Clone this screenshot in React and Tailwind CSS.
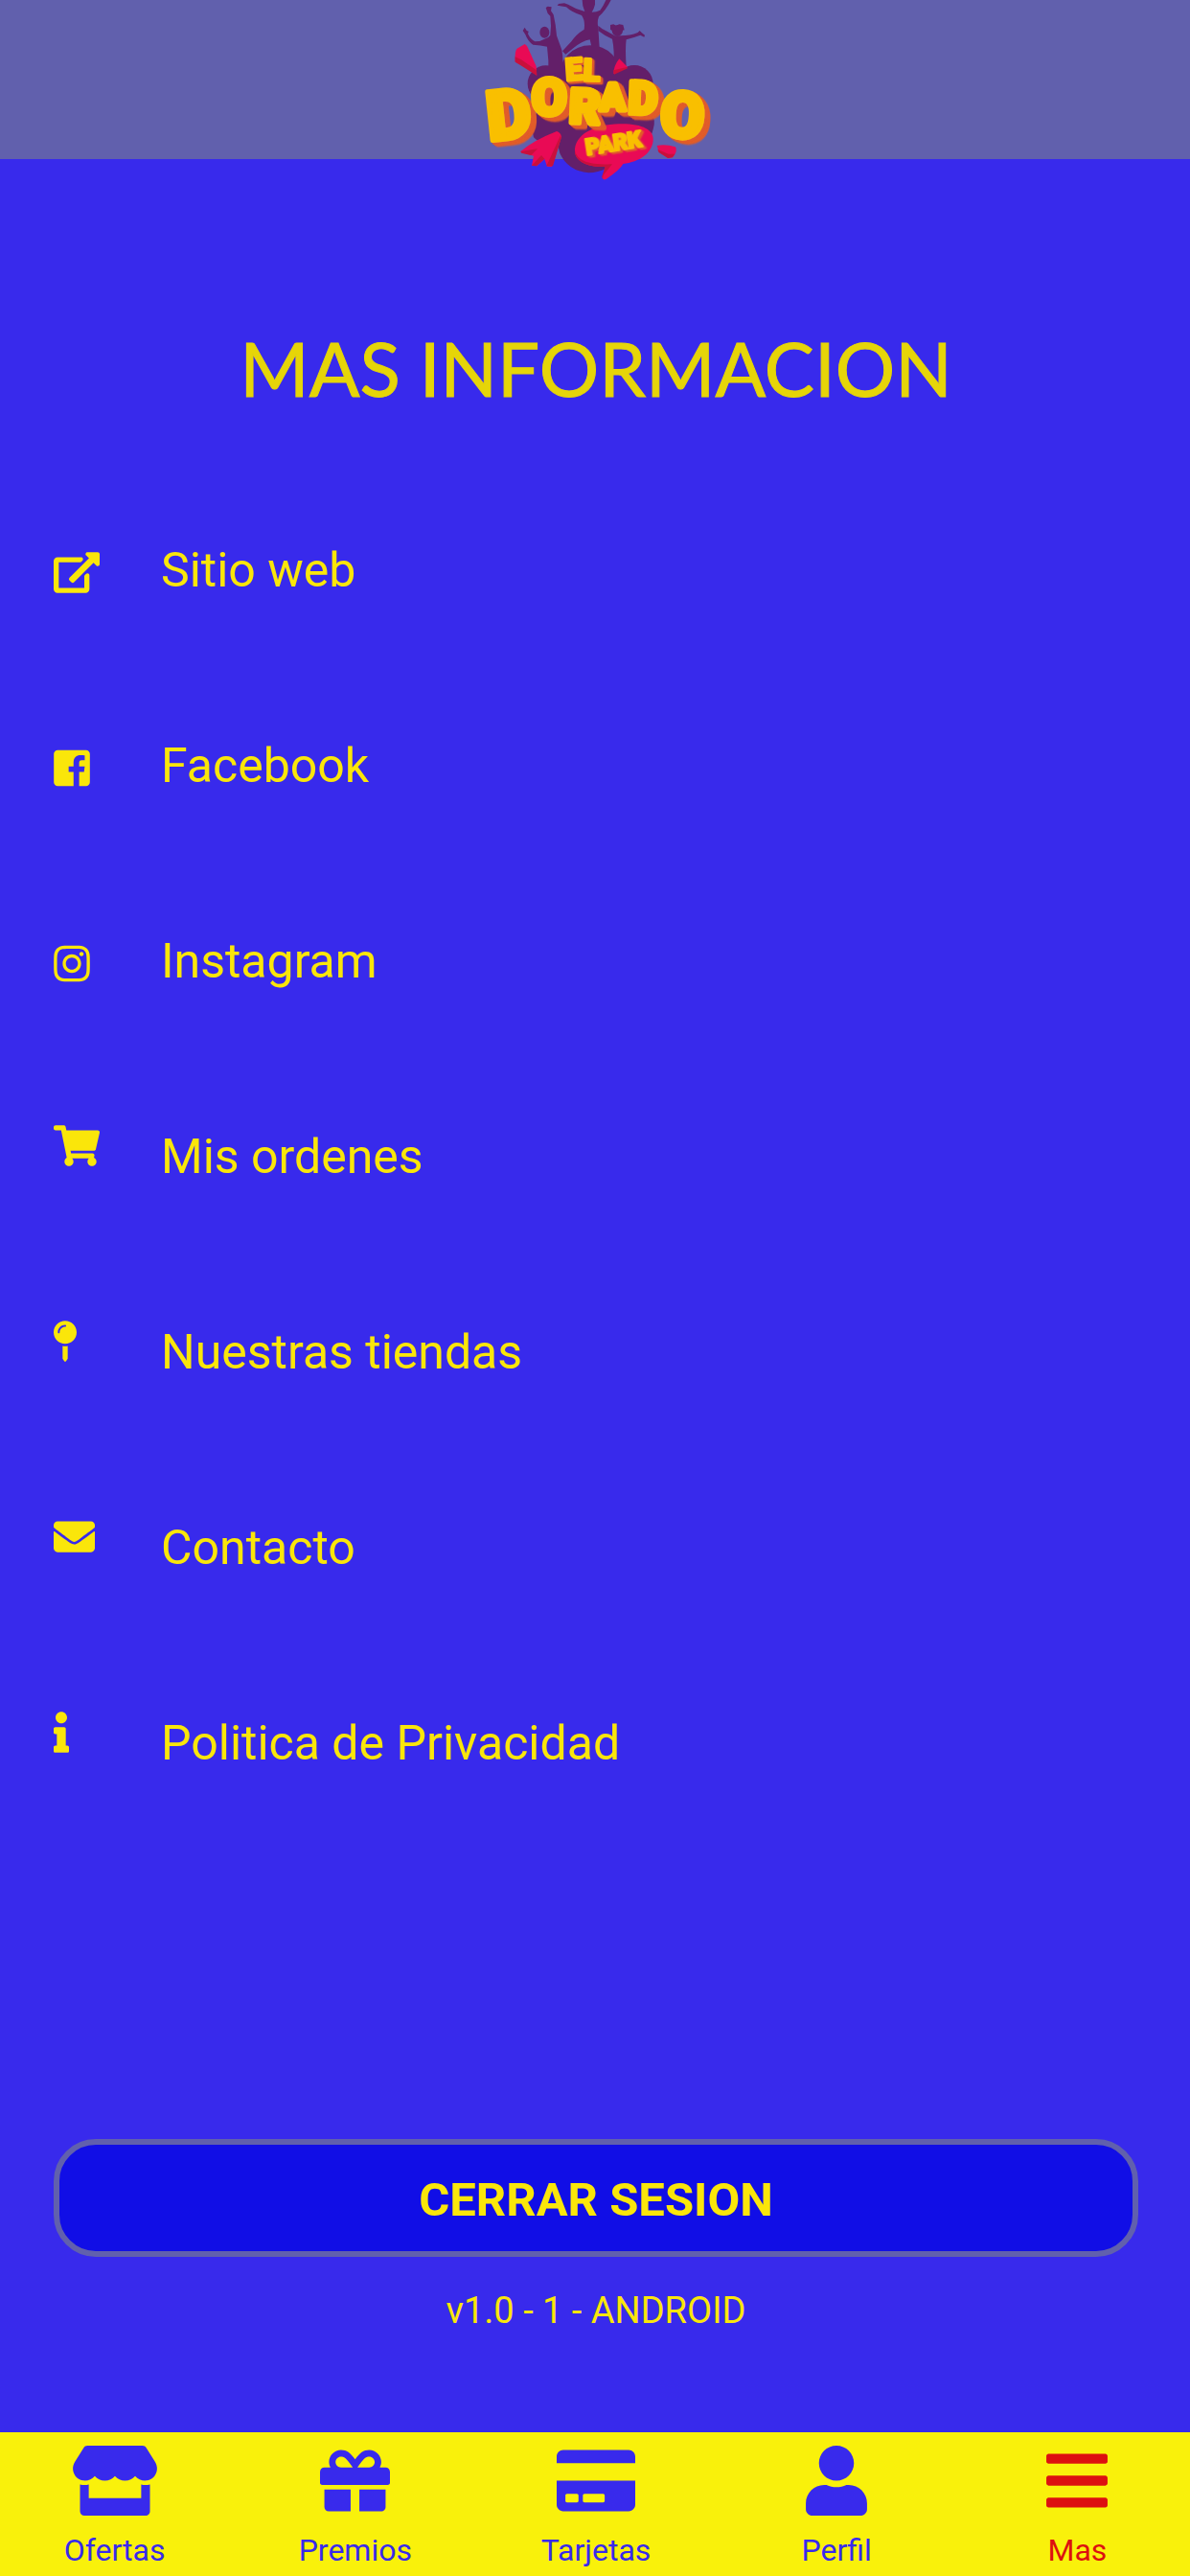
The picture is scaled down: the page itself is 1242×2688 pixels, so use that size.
import React from 'react';
import {
  FaInstagram,
  FaShoppingCart,
  FaMapPin,
  FaEnvelope,
  FaInfo,
  FaStore,
  FaGift,
  FaCreditCard,
  FaUser,
  FaBars,
} from 'react-icons/fa';

function ExternalLinkIcon({ className }) {
  return (
    <svg className={className} viewBox="0 0 576 512" fill="currentColor">
      <path d="M576 24v127.984c0 21.461-25.96 31.98-40.971 16.971l-35.707-35.709-243.523 243.523c-9.373 9.373-24.568 9.373-33.941 0l-22.627-22.627c-9.373-9.373-9.373-24.569 0-33.941L442.756 76.676l-35.703-35.705C391.982 25.9 402.656 0 424.024 0H552c13.255 0 24 10.745 24 24zM407.029 270.794l-16 16A23.999 23.999 0 0 0 384 303.765V448H64V128h264a24.003 24.003 0 0 0 16.97-7.029l16-16C376.089 89.851 365.381 64 344 64H48C21.49 64 0 85.49 0 112v352c0 26.51 21.49 48 48 48h352c26.51 0 48-21.49 48-48V287.764c0-21.382-25.852-32.09-40.971-16.97z" />
    </svg>
  );
}

function FacebookIcon({ className }) {
  return (
    <svg className={className} viewBox="0 0 448 512" fill="currentColor">
      <path d="M448 80v352c0 26.5-21.5 48-48 48h-85.3V302.8h60.6l8.7-67.6h-69.3V192c0-19.6 5.4-32.9 33.5-32.9H384V98.7c-6.2-.8-27.4-2.7-52.2-2.7-51.6 0-87 31.5-87 89.4v49.9H184v67.6h60.9V480H48c-26.5 0-48-21.5-48-48V80c0-26.5 21.5-48 48-48h352c26.5 0 48 21.5 48 48z" />
    </svg>
  );
}

// Letras del logo: cada una con su tamaño y giro
const dorado = [
  { c: 'D', x: 88, y: 441, size: 216, rotate: -6 },
  { c: 'O', x: 221, y: 360, size: 160, rotate: 0 },
  { c: 'R', x: 337, y: 383, size: 150, rotate: 3 },
  { c: 'A', x: 436, y: 345, size: 116, rotate: 0 },
  { c: 'D', x: 523, y: 355, size: 142, rotate: 2 },
  { c: 'O', x: 621, y: 427, size: 200, rotate: 3 },
];

function Logo() {
  return (
    <svg className="h-[200px] w-[280px] shrink-0" viewBox="0 0 840 600" role="img" aria-label="El Dorado Park">
      <defs>
        <filter id="extrude" x="-10%" y="-10%" width="125%" height="130%">
          <feDropShadow dx="6" dy="4" stdDeviation="0" floodColor="#e15c2b" />
          <feDropShadow dx="6" dy="4" stdDeviation="0" floodColor="#e15c2b" />
          <feDropShadow dx="6" dy="5" stdDeviation="0" floodColor="#e15c2b" />
        </filter>
        <filter id="extrudeSmall" x="-10%" y="-10%" width="125%" height="130%">
          <feDropShadow dx="4" dy="3" stdDeviation="0" floodColor="#e15c2b" />
          <feDropShadow dx="4" dy="4" stdDeviation="0" floodColor="#e15c2b" />
        </filter>
      </defs>

      {/* fondo */}
      <g fill="#631f69">
        <circle cx="266" cy="262" r="57" />
        <circle cx="405" cy="240" r="98" />
        <circle cx="543" cy="263" r="59" />
        <path d="M210 270H603L594 350Q612 375 602 405Q590 460 520 470L495 490Q460 540 400 541Q335 535 310 480L300 440Q250 455 228 430Q215 380 240 350Z" />
        {/* siluetas */}
        <path d="M380 0H420V14Q416 30 410 38Q425 38 436 32Q448 16 456 -4L472 -4Q456 30 432 52Q426 68 430 86L434 150H410L404 124Q380 128 350 152L328 170L318 160L346 130Q360 108 386 92Q390 64 378 48Q346 38 330 22L302 17L306 12L324 10L336 14Q362 30 388 36Q380 20 380 0Z" />
        <ellipse cx="262" cy="101" rx="15" ry="18" />
        <path d="M200 86L206 96L212 98L210 106Q218 124 232 130Q250 130 262 122Q274 120 280 110Q284 80 280 50L272 42L266 24L272 20L284 22L282 34L290 46Q298 80 300 112L316 156Q322 190 318 230H274Q276 190 270 146Q250 142 226 140Q210 130 202 108L194 96Z" />
        <circle cx="490" cy="96" r="17" />
        <path d="M468 78L478 76L486 80L496 76L508 78L512 94L504 96L474 96L468 92Z" />
        <path d="M430 80L442 90Q462 100 482 112H500Q530 112 554 102L560 96L566 102L576 110L574 116L562 110Q540 118 518 124Q514 150 518 210H478Q482 160 474 122Q450 112 430 96Z" />
      </g>

      {/* confeti */}
      <g fill="#e90a55">
        <path d="M200 138Q208 142 210 150L236 208L238 236L190 204L170 192Q168 160 176 152Z" />
        <path d="M496 184L522 210L478 232Q478 206 496 184Z" />
        <path d="M187 474Q226 440 300 411Q312 414 315 428L290 510L284 522L270 521L262 498L238 520L222 518L228 488L190 478Z" />
        <path d="M614 456Q640 450 672 460Q680 472 664 492L650 495L620 476Z" />
        <path d="M357 476C354 420 420 390 495 388C566 386 606 406 602 440C598 480 560 506 508 513Q500 530 456 560Q446 566 442 556L452 522C400 524 360 506 357 476Z" />
      </g>
      <g fill="#c8103c">
        <path d="M170 178L188 186L237 220V236L190 206L170 194Z" />
        <path d="M478 220L520 210L522 214L480 233Z" />
        <path d="M187 474L240 466L220 486L190 479Z" />
        <path d="M222 518L252 486L262 497L236 520Z" />
        <path d="M268 520L312 424L314 432L288 520Z" />
        <path d="M616 468L650 482L670 482L662 493L648 495L620 477Z" />
        <path d="M357 470C364 504 400 516 474 514L446 548L444 560L442 552L452 522C400 524 355 506 357 470Z" />
      </g>

      <g
        fill="#f9bf02"
        stroke="#f9bf02"
        strokeLinejoin="round"
        className="font-['Roboto',sans-serif] font-black"
      >
        <text x="329" y="252" fontSize="96" rotate="-4 2" strokeWidth="9" filter="url(#extrudeSmall)">
          EL
        </text>
        <text strokeWidth="15" filter="url(#extrude)">
          {dorado.map((l, i) => (
            <tspan key={i} x={l.x} y={l.y} fontSize={l.size} rotate={l.rotate}>
              {l.c}
            </tspan>
          ))}
        </text>
        <text
          x="394"
          y="487"
          fontSize="70"
          strokeWidth="6"
          transform="rotate(-9 394 487)"
          filter="url(#extrudeSmall)"
        >
          PARK
        </text>
      </g>
    </svg>
  );
}

const links = [
  { label: 'Sitio web', icon: ExternalLinkIcon, width: 'w-[48px]' },
  { label: 'Facebook', icon: FacebookIcon, width: 'w-[38px]' },
  { label: 'Instagram', icon: FaInstagram, width: 'w-[38px]' },
  { label: 'Mis ordenes', icon: FaShoppingCart, width: 'w-[48px]', raised: true },
  { label: 'Nuestras tiendas', icon: FaMapPin, width: 'w-[24px]', raised: true },
  { label: 'Contacto', icon: FaEnvelope, width: 'w-[43px]', raised: true },
  { label: 'Politica de Privacidad', icon: FaInfo, width: 'w-[16px]', raised: true },
];

const tabs = [
  { label: 'Ofertas', icon: FaStore, width: 'w-[88px]' },
  { label: 'Premios', icon: FaGift, width: 'w-[73px]' },
  { label: 'Tarjetas', icon: FaCreditCard, width: 'w-[82px]' },
  { label: 'Perfil', icon: FaUser, width: 'w-[64px]' },
  { label: 'Mas', icon: FaBars, width: 'w-[64px]', active: true },
];

export default function App() {
  return (
    <div className="flex min-h-screen flex-col overflow-hidden bg-[#382aec] font-['Roboto',sans-serif] text-[#fae60a]">
      <header className="flex h-[166px] items-start justify-center bg-[#6160ad]">
        <Logo />
      </header>

      <main className="flex flex-1 flex-col pr-[54px] pl-14">
        <h1 className="mt-[170px] text-center font-['Lato',sans-serif] text-[78px] leading-[96px] font-normal text-[#e6d508] [-webkit-text-stroke:1px_#e6d508]">
          MAS INFORMACION
        </h1>

        <ul className="mt-[61px]">
          {links.map(({ label, icon: Icon, width, raised }) => (
            <li key={label}>
              <a href="#" className="flex h-[204px] items-center text-[50px] leading-[56px]">
                <span className={`w-28 ${raised ? 'pb-6' : 'pt-1'}`}>
                  <Icon className={`block h-[43px] ${width}`} />
                </span>
                {label}
              </a>
            </li>
          ))}
        </ul>

        <button
          type="button"
          className="mt-[311px] h-[123px] rounded-[44px] border-6 border-[#6160ad] bg-[#110ee6] pt-1 text-[49px] leading-[56px] font-bold"
        >
          CERRAR SESION
        </button>
        <p className="mt-8 mb-[103px] text-center text-[38px] leading-[48px]">v1.0 - 1 - ANDROID</p>
      </main>

      <nav className="bg-[#f9f10b]">
        <ul className="-mr-2 -ml-1.5 flex h-[150px]">
          {tabs.map(({ label, icon: Icon, width, active }) => (
            <li key={label} className="flex-1">
              <a
                href="#"
                className={`flex flex-col items-center pt-3.5 text-[32px] leading-[40px] ${active ? 'text-[#dd1010]' : 'text-[#382aec]'}`}
              >
                <Icon className={`mb-4 h-[73px] ${width}`} />
                {label}
              </a>
            </li>
          ))}
        </ul>
      </nav>
    </div>
  );
}
